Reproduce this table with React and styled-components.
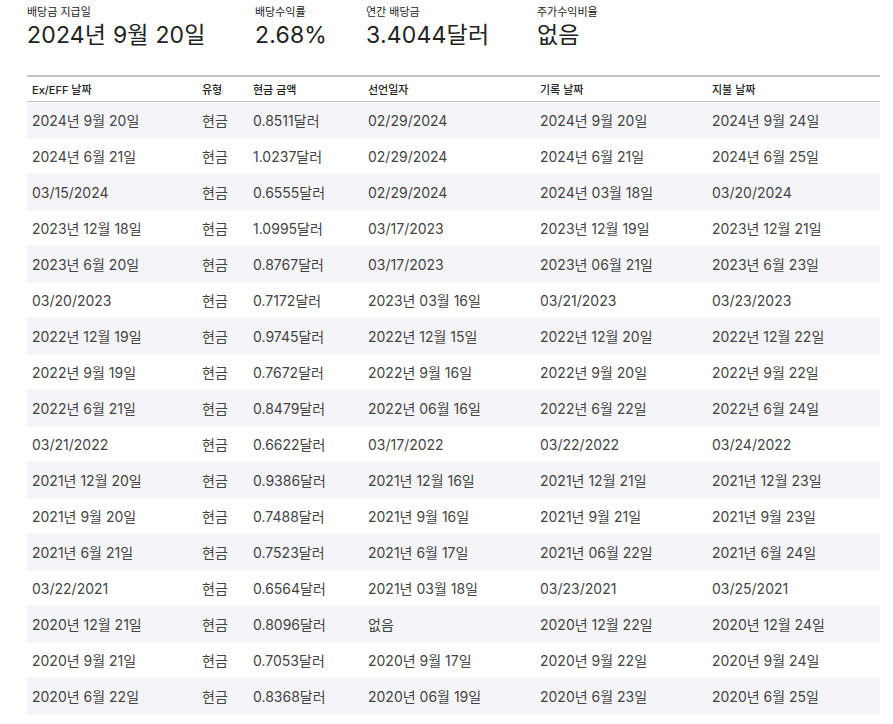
import React from 'react';
import styled, { createGlobalStyle } from 'styled-components';

const GlobalStyle = createGlobalStyle`
  body {
    margin: 0;
    background: #fff;
    font-family: Inter, "Noto Sans CJK KR", "Noto Sans", sans-serif;
    color: #333;
  }
`;

const Page = styled.div`
  padding: 5px 13px 0 27px;
  width: 853px;
`;

const Stats = styled.div`
  display: grid;
  grid-template-columns: 228px 111px 171px auto;
`;

const Stat = styled.div`
  display: flex;
  flex-direction: column;
`;

const StatLabel = styled.div`
  font-size: 11px;
  line-height: 14px;
  color: #222;
`;

const StatValue = styled.div`
  font-size: 23px;
  line-height: 30px;
  color: #222;
  margin-top: 1px;
  letter-spacing: 0.2px;
`;

const Table = styled.div`
  margin-top: 25px;
  border-top: 2px solid #c4c4c4;
`;

const Row = styled.div`
  display: grid;
  grid-template-columns: 170px 51px 115px 172px 172px 173px;
  height: ${({ head }) => (head ? '24px' : '36px')};
  align-items: center;
  background: ${({ shaded }) => (shaded ? '#f5f5f9' : '#fff')};
  border-bottom: ${({ head }) => (head ? '1px solid #c8c8c8' : 'none')};
`;

const Cell = styled.div`
  padding-left: 5px;
  font-size: ${({ head }) => (head ? '11px' : '14px')};
  font-weight: ${({ head }) => (head ? 500 : 400)};
  color: ${({ head }) => (head ? '#222' : '#444')};
  white-space: nowrap;
`;

const stats = [
  ['배당금 지급일', '2024년 9월 20일'],
  ['배당수익률', '2.68%'],
  ['연간 배당금', '3.4044달러'],
  ['주가수익비율', '없음'],
];

const headers = ['Ex/EFF 날짜', '유형', '현금 금액', '선언일자', '기록 날짜', '지불 날짜'];

const rows = [
  ['2024년 9월 20일', '0.8511달러', '02/29/2024', '2024년 9월 20일', '2024년 9월 24일'],
  ['2024년 6월 21일', '1.0237달러', '02/29/2024', '2024년 6월 21일', '2024년 6월 25일'],
  ['03/15/2024', '0.6555달러', '02/29/2024', '2024년 03월 18일', '03/20/2024'],
  ['2023년 12월 18일', '1.0995달러', '03/17/2023', '2023년 12월 19일', '2023년 12월 21일'],
  ['2023년 6월 20일', '0.8767달러', '03/17/2023', '2023년 06월 21일', '2023년 6월 23일'],
  ['03/20/2023', '0.7172달러', '2023년 03월 16일', '03/21/2023', '03/23/2023'],
  ['2022년 12월 19일', '0.9745달러', '2022년 12월 15일', '2022년 12월 20일', '2022년 12월 22일'],
  ['2022년 9월 19일', '0.7672달러', '2022년 9월 16일', '2022년 9월 20일', '2022년 9월 22일'],
  ['2022년 6월 21일', '0.8479달러', '2022년 06월 16일', '2022년 6월 22일', '2022년 6월 24일'],
  ['03/21/2022', '0.6622달러', '03/17/2022', '03/22/2022', '03/24/2022'],
  ['2021년 12월 20일', '0.9386달러', '2021년 12월 16일', '2021년 12월 21일', '2021년 12월 23일'],
  ['2021년 9월 20일', '0.7488달러', '2021년 9월 16일', '2021년 9월 21일', '2021년 9월 23일'],
  ['2021년 6월 21일', '0.7523달러', '2021년 6월 17일', '2021년 06월 22일', '2021년 6월 24일'],
  ['03/22/2021', '0.6564달러', '2021년 03월 18일', '03/23/2021', '03/25/2021'],
  ['2020년 12월 21일', '0.8096달러', '없음', '2020년 12월 22일', '2020년 12월 24일'],
  ['2020년 9월 21일', '0.7053달러', '2020년 9월 17일', '2020년 9월 22일', '2020년 9월 24일'],
  ['2020년 6월 22일', '0.8368달러', '2020년 06월 19일', '2020년 6월 23일', '2020년 6월 25일'],
];

export default function App() {
  return (
    <Page>
      <GlobalStyle />
      <Stats>
        {stats.map(([label, value]) => (
          <Stat key={label}>
            <StatLabel>{label}</StatLabel>
            <StatValue>{value}</StatValue>
          </Stat>
        ))}
      </Stats>
      <Table>
        <Row head>
          {headers.map((h) => (
            <Cell head key={h}>{h}</Cell>
          ))}
        </Row>
        {rows.map((r, i) => (
          <Row key={i} shaded={i % 2 === 0}>
            <Cell>{r[0]}</Cell>
            <Cell>현금</Cell>
            <Cell>{r[1]}</Cell>
            <Cell>{r[2]}</Cell>
            <Cell>{r[3]}</Cell>
            <Cell>{r[4]}</Cell>
          </Row>
        ))}
      </Table>
    </Page>
  );
}
